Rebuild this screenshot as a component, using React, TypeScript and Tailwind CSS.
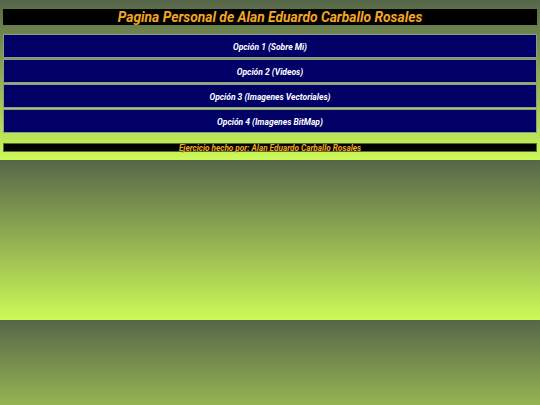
import React from 'react';

const options = [
  'Opción 1 (Sobre Mi)',
  'Opción 2 (Videos)',
  'Opción 3 (Imagenes Vectoriales)',
  'Opción 4 (Imagenes BitMap)',
];

export default function App() {
  return (
    <div
      className="min-h-[405px] w-full bg-[linear-gradient(to_bottom,#56664a,#cdfa58)] bg-[length:100%_160px] bg-repeat px-[3px] pt-[9px] font-['Roboto',sans-serif] italic font-bold"
    >
      {/* Title */}
      <div className="flex h-[16px] items-center justify-center bg-black text-[13.8px] leading-[16px] text-[#f2a623]">
        Pagina Personal de Alan Eduardo Carballo Rosales
      </div>

      {/* Menu */}
      <div className="mt-[9px] flex flex-col gap-px">
        {options.map((label) => (
          <div
            key={label}
            className="flex h-[24px] items-center justify-center border border-[#8d9a8e] bg-[#000066] pt-[2px] text-[8.5px] text-white"
          >
            {label}
          </div>
        ))}
      </div>

      {/* Footer */}
      <div className="mt-[10px] flex h-[9px] items-center justify-center border border-[#5a6a3a] bg-black text-[8.2px] leading-[8px] text-[#f2a623]">
        Ejercicio hecho por: Alan Eduardo Carballo Rosales
      </div>
    </div>
  );
}
